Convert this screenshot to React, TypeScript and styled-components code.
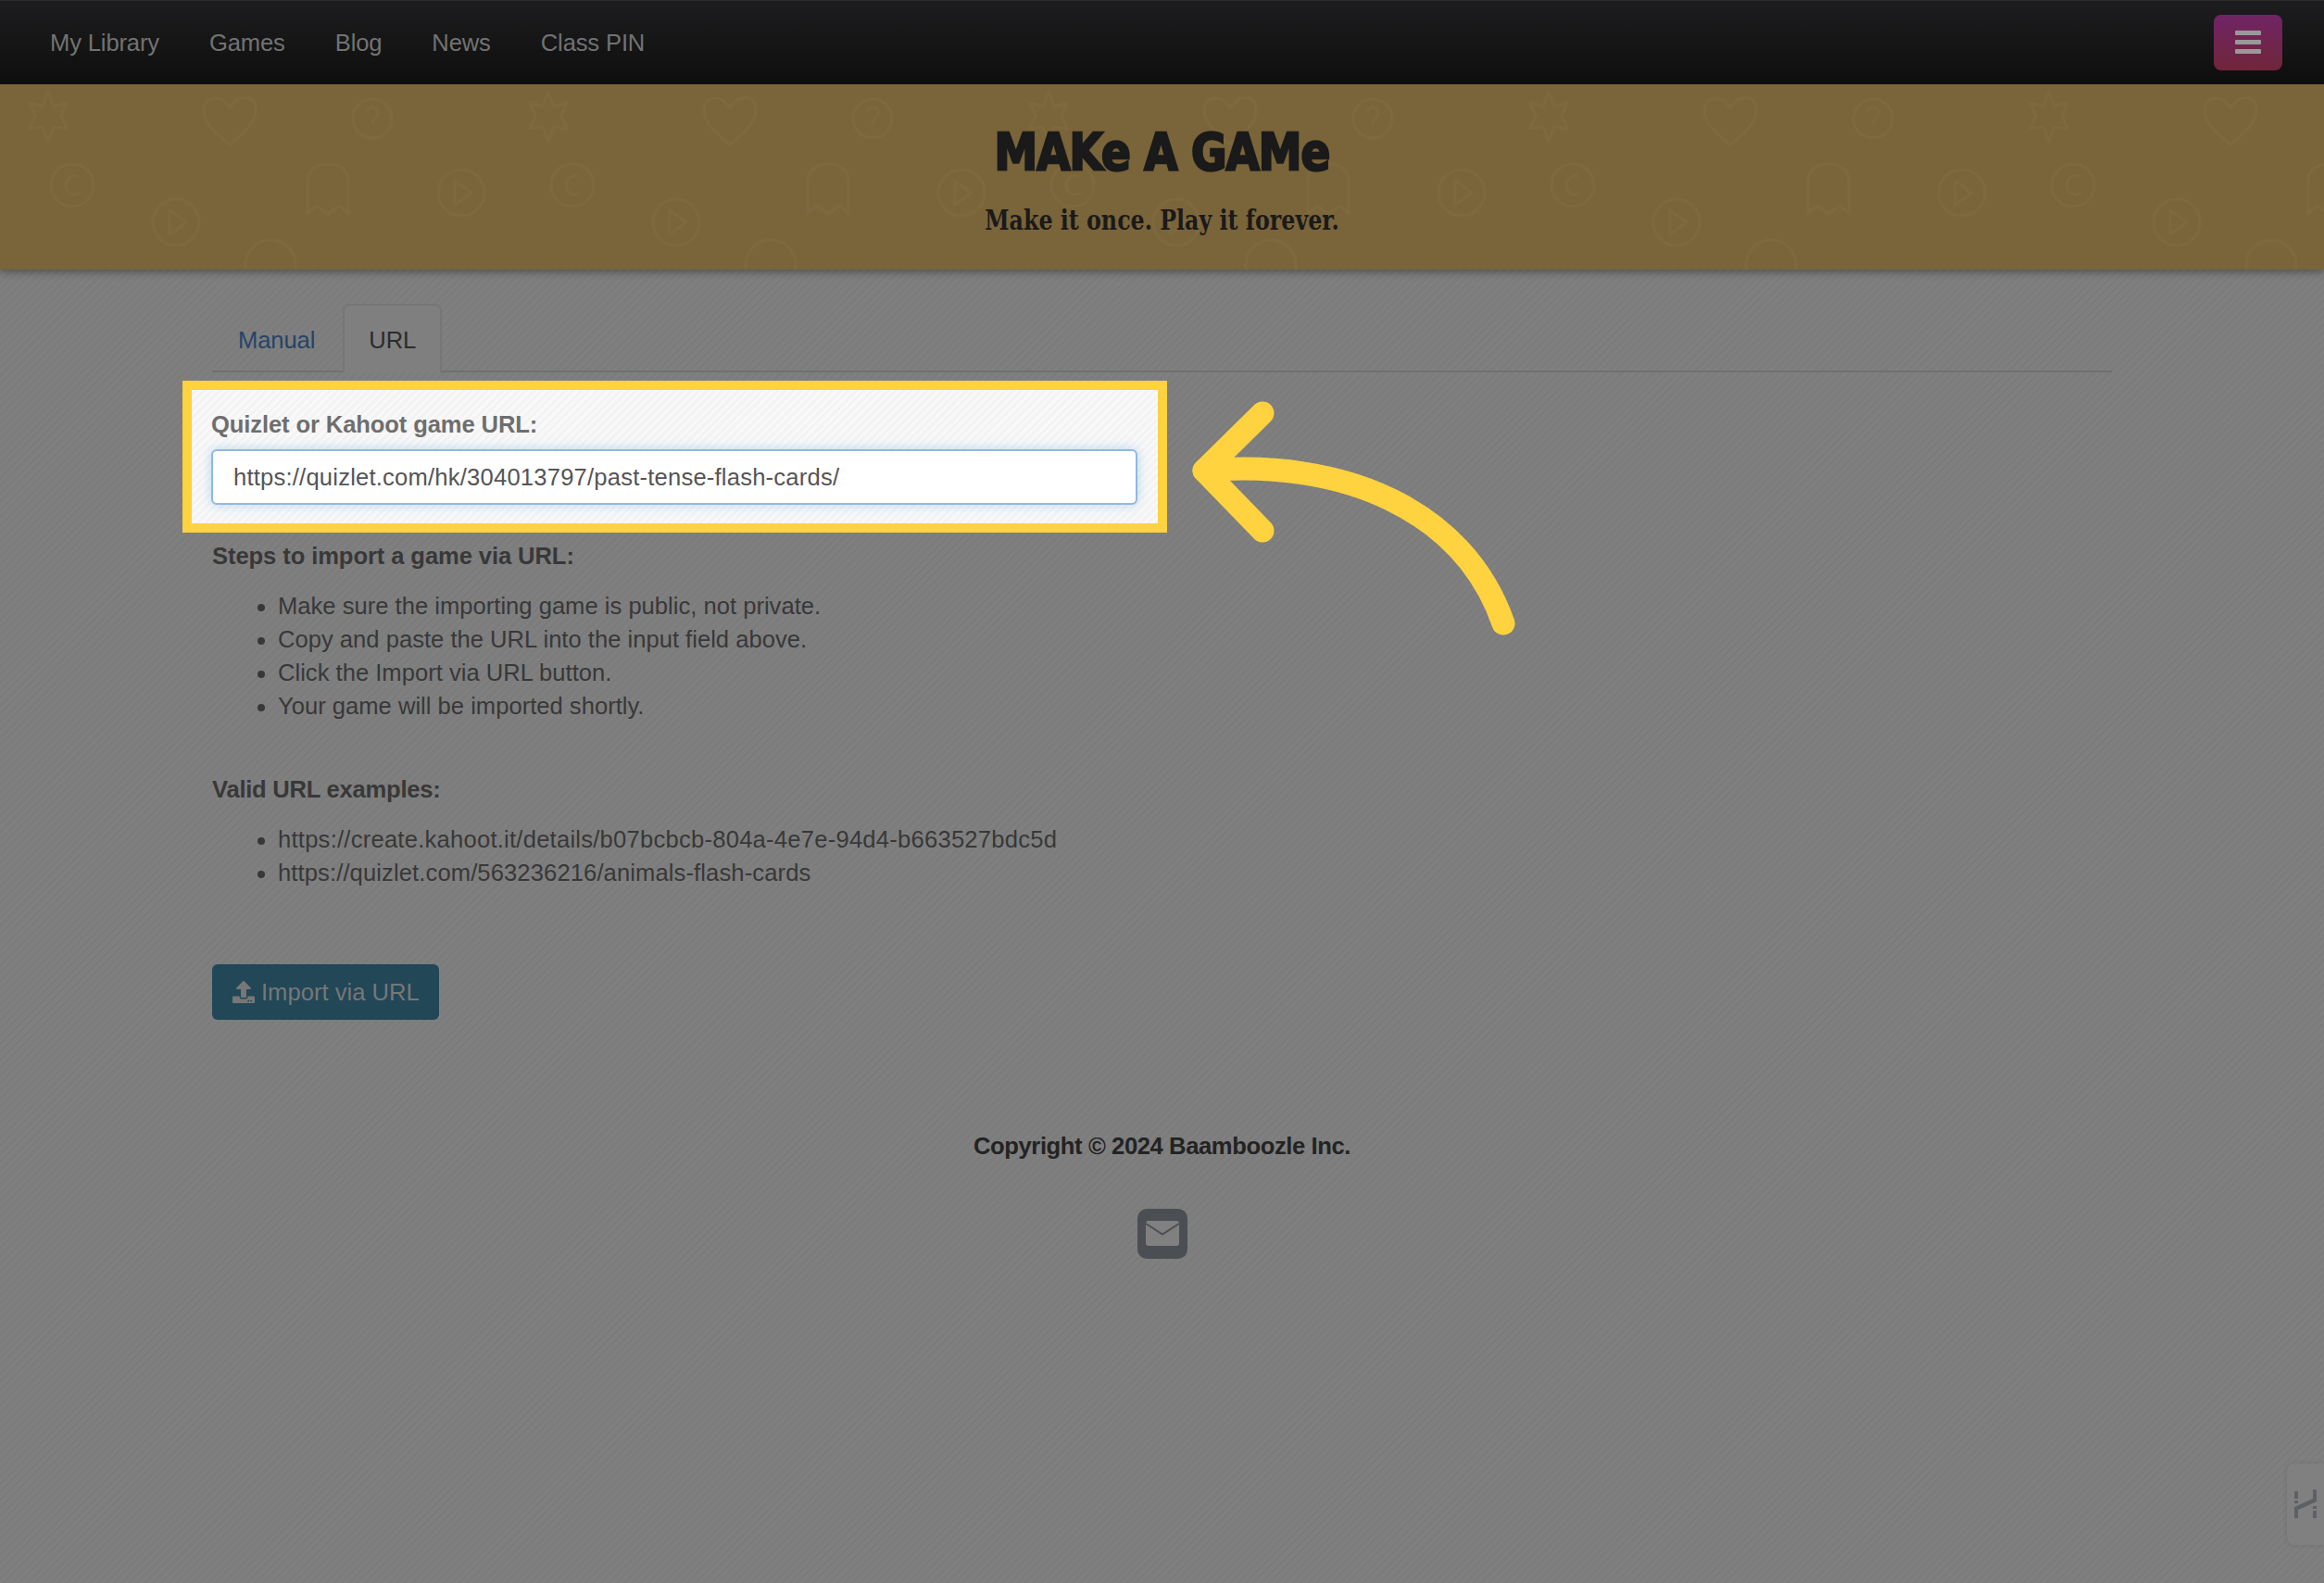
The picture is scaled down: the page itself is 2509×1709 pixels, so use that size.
import React from 'react';
import styled, { createGlobalStyle } from 'styled-components';
import { FaUpload } from 'react-icons/fa';

const navLinks = ['My Library', 'Games', 'Blog', 'News', 'Class PIN'];

const steps = [
  'Make sure the importing game is public, not private.',
  'Copy and paste the URL into the input field above.',
  'Click the Import via URL button.',
  'Your game will be imported shortly.',
];

const examples = [
  { url: 'https://create.kahoot.it/details/b07bcbcb-804a-4e7e-94d4-b663527bdc5d', spacing: 0.23 },
  { url: 'https://quizlet.com/563236216/animals-flash-cards', spacing: 0.1 },
];

export default function App() {
  return (
    <Page>
      <GlobalStyle />

      <Navbar>
        <NavLinks>
          {navLinks.map((link) => (
            <NavLink key={link}>{link}</NavLink>
          ))}
        </NavLinks>
        <MenuButton aria-label="Menu">
          <MenuBar />
          <MenuBar />
          <MenuBar />
        </MenuButton>
      </Navbar>

      <Banner>
        <BannerPattern aria-hidden="true">
          <defs>
            <pattern id="toys" width="540" height="200" patternUnits="userSpaceOnUse">
              <g fill="none" stroke="#7e693f" strokeWidth="3" strokeLinejoin="round">
                {/* star */}
                <path d="M52 8 L58 24 L72 20 L66 34 L72 48 L58 46 L52 62 L46 46 L32 48 L38 34 L32 20 L46 24 Z" />
                {/* heart */}
                <path d="M248 65 C232 52 220 42 220 28 C220 12 240 10 248 26 C256 10 276 10 276 28 C276 42 264 52 248 65 Z" />
                {/* question coin */}
                <circle cx="402" cy="37" r="21" />
                <path d="M396 30 C398 22 410 24 408 32 C407 37 402 37 402 43" />
                {/* smile coin */}
                <circle cx="78" cy="109" r="23" />
                <path d="M84 99 C72 96 66 112 76 118 C80 120 84 119 86 117" />
                {/* play */}
                <circle cx="190" cy="149" r="25" />
                <path d="M183 136 L201 149 L183 162 Z" />
                {/* ghost */}
                <path d="M332 139 L332 104 C332 80 376 80 376 104 L376 139 L366 131 L354 140 L342 131 Z" />
                {/* play 2 */}
                <circle cx="498" cy="117" r="25" />
                <path d="M491 104 L509 117 L491 130 Z" />
                {/* cut off at the bottom */}
                <circle cx="292" cy="195" r="27" />
              </g>
            </pattern>
          </defs>
          <rect width="100%" height="100%" fill="url(#toys)" />
        </BannerPattern>
        <BannerTitle>MAKe A GAMe</BannerTitle>
        <BannerTagline>Make it once. Play it forever.</BannerTagline>
      </Banner>

      <Main>
        <Tabs>
          <TabLink>Manual</TabLink>
          <TabLink $active>URL</TabLink>
        </Tabs>

        <Spotlight>
          <FieldLabel htmlFor="game-url">Quizlet or Kahoot game URL:</FieldLabel>
          <UrlInput
            id="game-url"
            readOnly
            value="https://quizlet.com/hk/304013797/past-tense-flash-cards/"
          />
        </Spotlight>

        <SectionHeading>Steps to import a game via URL:</SectionHeading>
        <BulletList>
          {steps.map((step) => (
            <li key={step}>{step}</li>
          ))}
        </BulletList>

        <ExamplesHeading>Valid URL examples:</ExamplesHeading>
        <BulletList>
          {examples.map((example) => (
            <li key={example.url} style={{ letterSpacing: `${example.spacing}px` }}>
              {example.url}
            </li>
          ))}
        </BulletList>

        <ImportButton>
          <FaUpload size={24} />
          Import via URL
        </ImportButton>
      </Main>

      <Footer>
        <Copyright>Copyright © 2024 Baamboozle Inc.</Copyright>
        <MailLink aria-label="Email">
          <svg width="54" height="54" viewBox="0 0 54 54">
            <rect width="54" height="54" rx="10" fill="#4b4e53" />
            <rect x="9" y="13" width="36" height="27" rx="3" fill="#808080" />
            <path d="M9 16 L27 27.500 L45 16" fill="none" stroke="#4b4e53" strokeWidth="2" />
          </svg>
        </MailLink>
      </Footer>

      <Arrow viewBox="0 0 400 300" aria-hidden="true">
        <g fill="none" stroke="#ffd23f" strokeWidth="25" strokeLinecap="round" strokeLinejoin="round">
          <path d="M103 36 L40 98 L103 163" />
          <path d="M40 98 C190 85 320 140 363 263" />
        </g>
      </Arrow>

      <SideTab aria-hidden="true">
        <svg width="26" height="32" viewBox="0 0 26 32" fill="#5d6065">
          <rect x="1" y="2" width="4" height="8" />
          <rect x="1" y="12" width="4" height="3" />
          <rect x="21" y="18" width="4" height="3" />
          <rect x="21" y="23" width="4" height="8" />
          <rect x="1" y="22" width="4" height="9" />
          <rect x="21" y="0" width="4" height="10" />
          <path d="M1 19 L25 8 L25 13 L1 24 Z" />
        </svg>
      </SideTab>
    </Page>
  );
}

const GlobalStyle = createGlobalStyle`
  html, body {
    margin: 0;
    padding: 0;
  }

  body {
    font-family: "Liberation Sans", Arial, sans-serif;
    background: #7f7f7f;
  }
`;

const Page = styled.div`
  position: relative;
  width: 2509px;
  height: 1709px;
  overflow: hidden;
  color: #333;
  background-color: #7e7e7e;
  background-image: repeating-linear-gradient(
    -45deg,
    rgba(0, 0, 0, 0.018) 0 3px,
    rgba(255, 255, 255, 0.012) 3px 6px
  );
`;

const Navbar = styled.nav`
  display: flex;
  align-items: center;
  justify-content: space-between;
  height: 91px;
  box-sizing: border-box;
  padding: 0 45px 0 54px;
  background: linear-gradient(#1d1d1f, #0e0e0e);
  border-top: 1px solid #2a2a2c;
`;

const NavLinks = styled.div`
  display: flex;
  gap: 54px;
`;

const NavLink = styled.a`
  font-size: 25.600px;
  letter-spacing: -0.15px;
  color: #727272;
`;

const MenuButton = styled.button`
  display: flex;
  flex-direction: column;
  align-items: center;
  justify-content: center;
  gap: 5px;
  width: 74px;
  height: 60px;
  margin-top: -1px;
  padding: 0;
  border: 0;
  border-radius: 8px;
  background: linear-gradient(#702465, #70263a);
`;

const MenuBar = styled.span`
  width: 28px;
  height: 5px;
  border-radius: 1px;
  background: #999;
`;

const Banner = styled.header`
  position: relative;
  height: 200px;
  box-sizing: border-box;
  padding-top: 44px;
  text-align: center;
  background: #7a6439;
  box-shadow: 0 3px 8px rgba(0, 0, 0, 0.35);
`;

const BannerPattern = styled.svg`
  position: absolute;
  inset: 0;
  width: 100%;
  height: 100%;
`;

const BannerTitle = styled.h1`
  position: relative;
  margin: 0;
  font-family: "DejaVu Sans Condensed", "DejaVu Sans", sans-serif;
  font-size: 56px;
  font-weight: 700;
  line-height: 58px;
  letter-spacing: -1px;
  color: #1a1a1a;
  -webkit-text-stroke: 2.500px #1a1a1a;
  transform: scaleX(0.93);
`;

const BannerTagline = styled.p`
  position: relative;
  margin: 27px 0 0;
  font-family: "DejaVu Serif Condensed", "DejaVu Serif", serif;
  font-size: 29px;
  font-weight: 700;
  line-height: 36px;
  color: #1a1a1a;
  transform: scaleX(0.91);
`;

const Main = styled.main`
  padding: 37px 229px 0 229px;
`;

const Tabs = styled.div`
  display: flex;
  gap: 2px;
  height: 74px;
  box-sizing: border-box;
  border-bottom: 2px solid #707070;
`;

const TabLink = styled.a<{ $active?: boolean }>`
  box-sizing: border-box;
  height: 74px;
  padding: 20px 26px 0;
  font-size: 25.600px;
  line-height: 34px;
  letter-spacing: -0.1px;
  border: 2px solid ${(p) => (p.$active ? '#767676' : 'transparent')};
  border-bottom: 0;
  border-radius: 7px 7px 0 0;
  color: ${(p) => (p.$active ? '#2b2b2b' : '#264469')};
  background: ${(p) => (p.$active ? '#7f7f7f' : 'transparent')};
`;

const Spotlight = styled.div`
  box-sizing: border-box;
  width: 1063px;
  height: 164px;
  margin: 9px 0 0 -32px;
  padding: 20px 21px 0;
  border: 10px solid #ffd23f;
  background-color: #f6f6f6;
  background-image: repeating-linear-gradient(
    -45deg,
    rgba(0, 0, 0, 0.012) 0 3px,
    rgba(255, 255, 255, 0.3) 3px 6px
  );
`;

const FieldLabel = styled.label`
  display: block;
  font-size: 25.600px;
  font-weight: 700;
  line-height: 34px;
  letter-spacing: -0.12px;
  color: #6e6e6e;
`;

const UrlInput = styled.input`
  display: block;
  box-sizing: border-box;
  width: 1000px;
  height: 60px;
  margin-top: 10px;
  padding: 0 22px;
  font-family: inherit;
  font-size: 25.600px;
  letter-spacing: 0.2px;
  color: #555;
  background: #fff;
  border: 2px solid #8fb8e6;
  border-radius: 6px;
  outline: 0;
  box-shadow: 0 0 12px rgba(102, 175, 233, 0.45);
`;

const SectionHeading = styled.p`
  margin: 7px 0 0;
  font-size: 25.600px;
  font-weight: 700;
  line-height: 36px;
  letter-spacing: -0.1px;
  color: #383838;
`;

const ExamplesHeading = styled(SectionHeading)`
  margin-top: 54px;
  letter-spacing: -0.25px;
`;

const BulletList = styled.ul`
  margin: 18px 0 0;
  padding: 0 0 0 71px;
  font-size: 25.600px;
  line-height: 36px;
  color: #383838;
`;

const ImportButton = styled.button`
  display: flex;
  align-items: center;
  gap: 7px;
  box-sizing: border-box;
  height: 60px;
  margin-top: 81px;
  padding: 0 21px 0 22px;
  font-family: inherit;
  font-size: 25.600px;
  color: #777;
  background: #224757;
  border: 0;
  border-radius: 6px;
`;

const Footer = styled.footer`
  display: flex;
  flex-direction: column;
  align-items: center;
  margin-top: 118px;
`;

const Copyright = styled.p`
  margin: 0;
  font-size: 25.600px;
  font-weight: 700;
  line-height: 36px;
  letter-spacing: -0.4px;
  color: #232323;
`;

const MailLink = styled.a`
  display: block;
  height: 54px;
  margin-top: 50px;
`;

const Arrow = styled.svg`
  position: absolute;
  left: 1260px;
  top: 410px;
  width: 400px;
  height: 300px;
`;

const SideTab = styled.div`
  position: absolute;
  right: 0;
  top: 1580px;
  display: flex;
  align-items: center;
  justify-content: center;
  box-sizing: border-box;
  width: 40px;
  height: 88px;
  border-radius: 8px 0 0 8px;
  background: #808080;
  box-shadow: 0 0 5px rgba(0, 0, 0, 0.12);
`;
